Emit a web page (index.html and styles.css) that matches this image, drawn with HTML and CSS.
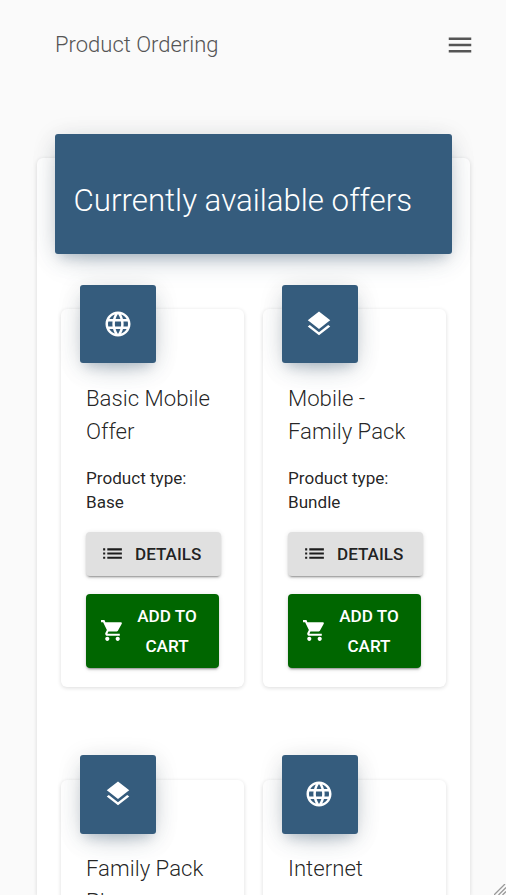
FILE: index.html
```html
<!DOCTYPE html>
<html lang="en">
<head>
<meta charset="utf-8">
<title>Product Ordering</title>
<link rel="stylesheet" href="styles.css">
</head>
<body>
<svg class="sprite" aria-hidden="true">
  <symbol id="globe" viewBox="0 0 24 24"><path d="M11.99 2C6.47 2 2 6.48 2 12s4.47 10 9.99 10C17.52 22 22 17.52 22 12S17.52 2 11.99 2zm6.93 6h-2.95c-.32-1.25-.78-2.45-1.38-3.56 1.84.63 3.37 1.91 4.33 3.56zM12 4.04c.83 1.2 1.48 2.53 1.91 3.96h-3.82c.43-1.43 1.08-2.76 1.91-3.96zM4.26 14C4.1 13.36 4 12.69 4 12s.1-1.36.26-2h3.38c-.08.66-.14 1.32-.14 2s.06 1.34.14 2H4.26zm.82 2h2.95c.32 1.25.78 2.45 1.38 3.56-1.84-.63-3.37-1.9-4.33-3.56zm2.95-8H5.08c.96-1.66 2.49-2.93 4.33-3.56C8.81 5.55 8.35 6.75 8.03 8zM12 19.96c-.83-1.2-1.48-2.53-1.91-3.96h3.82c-.43 1.43-1.08 2.76-1.91 3.96zM14.34 14H9.66c-.09-.66-.16-1.32-.16-2s.07-1.35.16-2h4.68c.09.65.16 1.32.16 2s-.07 1.34-.16 2zm.25 5.56c.6-1.11 1.06-2.31 1.38-3.56h2.95c-.96 1.65-2.49 2.93-4.33 3.56zM16.36 14c.08-.66.14-1.32.14-2s-.06-1.34-.14-2h3.38c.16.64.26 1.31.26 2s-.1 1.36-.26 2h-3.38z"/></symbol>
  <symbol id="layers" viewBox="0 0 24 24"><path d="M11.99 18.54l-7.37-5.73L3 14.07l9 7 9-7-1.63-1.27-7.38 5.74zM12 16l7.36-5.73L21 9l-9-7-9 7 1.63 1.27L12 16z"/></symbol>
  <symbol id="list" viewBox="0 0 24 24"><path d="M3 13h2v-2H3v2zm0 4h2v-2H3v2zm0-8h2V7H3v2zm4 4h14v-2H7v2zm0 4h14v-2H7v2zM7 7v2h14V7H7z"/></symbol>
  <symbol id="cart" viewBox="0 0 24 24"><path d="M7 18c-1.1 0-1.99.9-1.99 2S5.900 22 7 22s2-.9 2-2-.9-2-2-2zM1 2v2h2l3.600 7.590-1.350 2.450c-.16.28-.25.61-.25.960 0 1.100.9 2 2 2h12v-2H7.420c-.14 0-.25-.11-.25-.25l.03-.12.9-1.630h7.450c.75 0 1.410-.41 1.750-1.030l3.580-6.490c.08-.14.12-.31.12-.48 0-.55-.45-1-1-1H5.210l-.94-2H1zm16 16c-1.100 0-1.990.9-1.990 2s.89 2 1.990 2 2-.9 2-2-.9-2-2-2z"/></symbol>
  <symbol id="menu" viewBox="0 0 24 24"><path d="M3 18h18v-2H3v2zm0-5h18v-2H3v2zm0-7v2h18V6H3z"/></symbol>
</svg>
<header class="topbar">
  <span class="brand">Product Ordering</span>
  <svg class="menu-icon"><use href="#menu"/></svg>
</header>
<main class="panel">
  <h1 class="panel-header">Currently available offers</h1>
  <div class="offers">
    <article class="offer">
      <div class="tile"><svg><use href="#globe"/></svg></div>
      <h2>Basic Mobile Offer</h2>
      <p>Product type: Base</p>
      <button class="btn details"><svg><use href="#list"/></svg><span>DETAILS</span></button>
      <button class="btn add"><svg><use href="#cart"/></svg><span>ADD TO CART</span></button>
    </article>
    <article class="offer">
      <div class="tile"><svg><use href="#layers"/></svg></div>
      <h2>Mobile - Family Pack</h2>
      <p>Product type: Bundle</p>
      <button class="btn details"><svg><use href="#list"/></svg><span>DETAILS</span></button>
      <button class="btn add"><svg><use href="#cart"/></svg><span>ADD TO CART</span></button>
    </article>
    <article class="offer">
      <div class="tile"><svg><use href="#layers"/></svg></div>
      <h2>Family Pack Plus</h2>
    </article>
    <article class="offer">
      <div class="tile"><svg><use href="#globe"/></svg></div>
      <h2>Internet</h2>
    </article>
  </div>
</main>
<svg class="grip" viewBox="0 0 12 11"><path d="M0 11L11 0M4.500 11L12 3.500M8.500 11L12 7.500"/></svg>
</body>
</html>
```
FILE: styles.css
```css
* { box-sizing: border-box; }
body {
  margin: 0;
  height: 895px;
  overflow: hidden;
  background: #fafafa;
  color: rgba(0, 0, 0, .87);
  font-family: Roboto, sans-serif;
}
svg { fill: currentColor; flex: none; display: block; }
.sprite { position: absolute; width: 0; height: 0; }
.topbar {
  display: flex;
  align-items: center;
  justify-content: space-between;
  height: 89px;
  padding: 0 31.3px 0 55px;
  color: #555;
}
.brand { font-size: 22px; font-weight: 300; }
.menu-icon { width: 30px; height: 30px; }
.panel {
  width: 433px;
  height: 737px;
  margin: 69px 0 0 37px;
  padding: 0 18px;
  background: #fff;
  border-radius: 6px 6px 0 0;
  box-shadow: 0 1px 4px rgba(0, 0, 0, .14);
}
.panel-header {
  display: flex;
  align-items: center;
  height: 120px;
  margin: 0;
  padding: 12px 18.5px 0;
  color: #fff;
  background: #355c7d;
  border-radius: 3px;
  font-size: 31.25px;
  font-weight: 300;
  white-space: nowrap;
  transform: translateY(-24px);
  box-shadow: 0 10px 30px -12px rgba(53, 92, 125, .35), 0 4px 25px rgba(0, 0, 0, .12), 0 8px 10px -5px rgba(53, 92, 125, .2);
}
.offers {
  display: grid;
  grid-template-columns: 183.4px 183.4px;
  grid-template-rows: 378px 378px;
  column-gap: 18.6px;
  row-gap: 92.5px;
  padding: 31px 6px 0;
}
.offer {
  padding: 0 25px;
  border-radius: 6px;
  background: #fff;
  box-shadow: 0 1px 4px rgba(0, 0, 0, .14);
}
.tile {
  display: grid;
  place-items: center;
  width: 76px;
  height: 78.4px;
  margin: -24.2px 0 18.4px -6px;
  color: #fff;
  background: #355c7d;
  border-radius: 3px;
  box-shadow: 0 10px 30px -12px rgba(53, 92, 125, .35), 0 4px 25px rgba(0, 0, 0, .12), 0 8px 10px -5px rgba(53, 92, 125, .2);
}
.tile svg { width: 30px; height: 30px; margin: 0 1px 1px 0; }
.offer h2 {
  margin: 0 0 18.4px;
  font-size: 22.2px;
  font-weight: 300;
  line-height: 33px;
}
.offer p {
  width: 110px;
  margin: 0 0 18px;
  font-size: 17.1px;
  line-height: 24px;
}
.btn {
  display: flex;
  align-items: center;
  border: 0;
  border-radius: 4px;
  font: 500 17.1px/30px Roboto, sans-serif;
  box-shadow: 0 3px 1px -2px rgba(0, 0, 0, .2), 0 2px 2px rgba(0, 0, 0, .14), 0 1px 5px rgba(0, 0, 0, .12);
}
.details {
  width: 135px;
  height: 44px;
  margin-bottom: 18px;
  padding: 0 14px;
  gap: 10px;
  color: rgba(0, 0, 0, .87);
  background: #e0e0e0;
}
.add {
  width: 133px;
  height: 74px;
  padding: 0 14px;
  gap: 7px;
  color: #fff;
  background: #060;
}
.btn svg { width: 25px; height: 25px; }
.add span { width: 70px; text-align: center; }
.grip {
  position: fixed;
  right: 0;
  bottom: 0;
  width: 12px;
  height: 11px;
  stroke: #999;
  stroke-width: 1.3;
  fill: none;
}
```
